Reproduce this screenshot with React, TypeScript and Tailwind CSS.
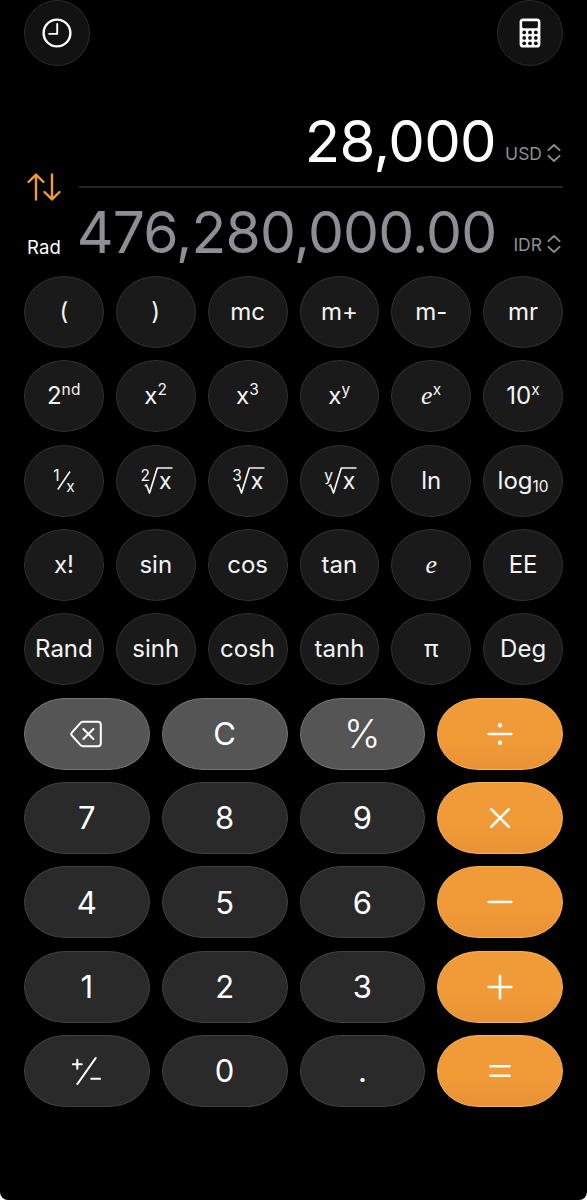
import React from 'react';

type KeyTone = 'science' | 'digit' | 'utility' | 'operator';

interface CalcKey {
  id: string;
  label: React.ReactNode;
}

interface PadKey extends CalcKey {
  tone: KeyTone;
}

const toneClasses: Record<KeyTone, string> = {
  science: 'rounded-[50%] border-[#303030] bg-[#1a1a1a] text-2xl text-[#f4f4f4]',
  digit: 'rounded-[41px/36px] border-[#404040] bg-[#2a2a2a] text-[31px] text-white',
  utility: 'rounded-[41px/36px] border-[#747474] bg-[#555555] text-[31px] text-white',
  operator:
    'rounded-[41px/36px] border-[#f6b253] bg-linear-to-b from-[#f19a38] from-60% to-[#e99236] text-white',
};

const Sup = ({ children }: { children: React.ReactNode }) => (
  <span className="inline-block -translate-y-[9px] text-[15.5px] tracking-[0.3px]">{children}</span>
);

const Euler = () => (
  <span className="font-['Liberation_Serif',serif] text-[26px] italic">e</span>
);

const Root = ({ index }: { index: string }) => (
  <span className="flex h-[27px] -translate-x-px items-start">
    <span className="w-2 pt-px text-[15.5px] leading-none">{index}</span>
    <svg width="29" height="28" viewBox="0 0 29 28" fill="none" stroke="currentColor" strokeWidth="1.7" className="-ml-1 shrink-0">
      <path d="M0.8 19 2.5 18 5.5 26 13.3 1H28.5" strokeLinejoin="round" />
    </svg>
    <span className="-ml-[14.5px] w-[10px] pt-[3px] text-[23px] leading-none">x</span>
  </span>
);

const Reciprocal = () => (
  <span className="flex h-6 items-start text-[15.5px] leading-none">
    <span className="w-[5px] -translate-y-px">1</span>
    <svg width="14" height="21" viewBox="0 0 14 21" fill="none" stroke="currentColor" strokeWidth="1.6" className="mt-px -ml-px">
      <path d="M0.8 19.5 13 1.5" />
    </svg>
    <span className="-ml-[5px] pt-[10px]">x</span>
  </span>
);

const Operator = ({ children }: { children: React.ReactNode }) => (
  <svg width="28" height="28" viewBox="-14 -14 28 28" fill="none" stroke="currentColor" strokeWidth="2.6" strokeLinecap="round">
    {children}
  </svg>
);

const BackspaceIcon = () => (
  <svg width="32" height="28" viewBox="0 0 32 28" fill="none" stroke="currentColor" strokeWidth="2" strokeLinecap="round" strokeLinejoin="round" className="-translate-x-px">
    <path d="M12.8 1.8h15a3 3 0 0 1 3 3v18.4a3 3 0 0 1-3 3h-15a3 3 0 0 1-2.2-1L2 15.6a2.4 2.4 0 0 1 0-3.2l8.6-9.6a3 3 0 0 1 2.2-1Z" />
    <path d="m13.4 9 10 10M23.4 9l-10 10" />
  </svg>
);

const PlusMinusIcon = () => (
  <svg width="30" height="30" viewBox="0 0 30 30" fill="none" stroke="currentColor" strokeWidth="2.1" strokeLinecap="round" className="-translate-x-px">
    <path d="M1.9 8.3h8.8M6.3 3.9v8.8M6.4 28 24.7 2M20.3 22.8h8.8" />
  </svg>
);

const scienceKeys: CalcKey[] = [
  { id: 'open', label: '(' },
  { id: 'close', label: ')' },
  { id: 'mc', label: 'mc' },
  { id: 'm-plus', label: 'm+' },
  { id: 'm-minus', label: 'm-' },
  { id: 'mr', label: 'mr' },
  { id: 'second', label: <span>2<Sup>nd</Sup></span> },
  { id: 'square', label: <span>x<Sup>2</Sup></span> },
  { id: 'cube', label: <span>x<Sup>3</Sup></span> },
  { id: 'power', label: <span>x<Sup>y</Sup></span> },
  { id: 'exp', label: <span><Euler /><Sup>x</Sup></span> },
  { id: 'ten-power', label: <span>10<Sup>x</Sup></span> },
  { id: 'reciprocal', label: <Reciprocal /> },
  { id: 'square-root', label: <Root index="2" /> },
  { id: 'cube-root', label: <Root index="3" /> },
  { id: 'y-root', label: <Root index="y" /> },
  { id: 'ln', label: 'ln' },
  {
    id: 'log',
    label: (
      <span>
        log<span className="inline-block translate-y-[3px] text-[15.5px]">10</span>
      </span>
    ),
  },
  { id: 'factorial', label: 'x!' },
  { id: 'sin', label: 'sin' },
  { id: 'cos', label: 'cos' },
  { id: 'tan', label: 'tan' },
  { id: 'e', label: <Euler /> },
  { id: 'ee', label: 'EE' },
  { id: 'rand', label: 'Rand' },
  { id: 'sinh', label: 'sinh' },
  { id: 'cosh', label: 'cosh' },
  { id: 'tanh', label: 'tanh' },
  { id: 'pi', label: 'π' },
  { id: 'deg', label: 'Deg' },
];

const padKeys: PadKey[] = [
  { id: 'backspace', tone: 'utility', label: <BackspaceIcon /> },
  { id: 'clear', tone: 'utility', label: 'C' },
  { id: 'percent', tone: 'utility', label: <span className="text-[39px] font-light">%</span> },
  {
    id: 'divide',
    tone: 'operator',
    label: (
      <Operator>
        <path d="M-11.2 0h22.4" />
        <circle cy="-8.8" r="2.2" fill="currentColor" stroke="none" />
        <circle cy="8.8" r="2.2" fill="currentColor" stroke="none" />
      </Operator>
    ),
  },
  { id: '7', tone: 'digit', label: '7' },
  { id: '8', tone: 'digit', label: '8' },
  { id: '9', tone: 'digit', label: '9' },
  { id: 'multiply', tone: 'operator', label: <Operator><path d="m-8.8-8.8 17.6 17.6M8.8-8.8-8.8 8.8" /></Operator> },
  { id: '4', tone: 'digit', label: '4' },
  { id: '5', tone: 'digit', label: '5' },
  { id: '6', tone: 'digit', label: '6' },
  { id: 'subtract', tone: 'operator', label: <Operator><path d="M-11.2 0h22.4" /></Operator> },
  { id: '1', tone: 'digit', label: '1' },
  { id: '2', tone: 'digit', label: '2' },
  { id: '3', tone: 'digit', label: '3' },
  { id: 'add', tone: 'operator', label: <Operator><path d="M-11.2 0h22.4M0-11.2v22.4" /></Operator> },
  { id: 'sign', tone: 'digit', label: <PlusMinusIcon /> },
  { id: '0', tone: 'digit', label: '0' },
  { id: 'decimal', tone: 'digit', label: '.' },
  { id: 'equals', tone: 'operator', label: <Operator><path d="M-9.4-4.7H9.4M-9.4 4.7H9.4" /></Operator> },
];

const Key = ({ tone, label }: { tone: KeyTone; label: React.ReactNode }) => (
  <button className={`flex h-[72px] min-w-0 items-center justify-center border leading-none ${toneClasses[tone]}`}>
    {label}
  </button>
);

const Currency = ({ code }: { code: string }) => (
  <span className="flex -translate-y-0.5 items-baseline gap-[5px] text-[17.5px] text-[#8e8e93]">
    {code}
    <svg width="16" height="18" viewBox="0 0 16 18" fill="none" stroke="currentColor" strokeWidth="1.8" strokeLinecap="round" strokeLinejoin="round" className="-translate-x-px translate-y-[2px]">
      <path d="M2.4 6.2 8 1l5.6 5.2M2.4 11.8 8 17l5.6-5.2" />
    </svg>
  </span>
);

export default function App() {
  return (
    <div className="h-[1200px] w-[587px] overflow-hidden rounded-b-[8px] bg-black px-6 font-['Inter',sans-serif] text-white">
      <header className="flex justify-between">
        <button className="flex size-[66px] items-center justify-center rounded-full border border-[#2b2b2b] bg-[#121212]">
          <svg width="30" height="30" viewBox="0 0 30 30" fill="none" stroke="currentColor">
            <circle cx="15" cy="15" r="13.4" strokeWidth="2.4" />
            <path d="M15.2 6v9.9H7.2" strokeWidth="1.9" strokeLinecap="round" strokeLinejoin="round" />
          </svg>
        </button>
        <button className="flex size-[66px] items-center justify-center rounded-full border border-[#2b2b2b] bg-[#121212]">
          <svg width="22" height="30" viewBox="0 0 22 30">
            <rect x="0.6" y="0.5" width="20.8" height="29" rx="3.6" fill="currentColor" />
            <g fill="#121212">
              <rect x="3.1" y="3.2" width="15.8" height="7" rx="1.4" />
              {[14.4, 19.9, 25.3].map((cy) =>
                [5.2, 11, 16.8].map((cx) => <circle key={`${cx}-${cy}`} cx={cx} cy={cy} r="1.9" />)
              )}
            </g>
          </svg>
        </button>
      </header>

      <section className="flex h-[210px] pt-[43px]">
        <div className="flex w-[55px] flex-col pt-16 pl-[3px]">
          <svg width="34" height="28" viewBox="0 0 34 28" fill="none" stroke="#f09a38" strokeWidth="2.4" strokeLinecap="round" strokeLinejoin="round">
            <path d="M9 26.5V1.6M1.5 9 9 1.6 16.5 9M25 1.5v24.9M17.5 19l7.5 7.4L32.5 19" />
          </svg>
          <span className="mt-[34px] text-[18.5px] leading-6 tracking-[0.2px]">Rad</span>
        </div>
        <div className="w-[484px] shrink-0">
          <div className="flex h-16 items-baseline justify-end gap-[9px] text-[58px] leading-[64px]">
            <span className="tracking-[-0.6px]">28,000</span>
            <Currency code="USD" />
          </div>
          <div className="mt-[13px] h-0.5 bg-[#252525]" />
          <div className="mt-[13px] flex h-16 items-baseline justify-end gap-[17px] text-[57px] leading-[64px] text-[#8e8e93]">
            <span className="tracking-[-0.8px]">476,280,000.00</span>
            <Currency code="IDR" />
          </div>
        </div>
      </section>

      <main className="flex flex-col gap-[12.33px]">
        <div className="grid grid-cols-6 gap-x-3 gap-y-[12.33px]">
          {scienceKeys.map((key) => (
            <Key key={key.id} tone="science" label={key.label} />
          ))}
        </div>
        <div className="grid grid-cols-4 gap-x-3 gap-y-[12.33px]">
          {padKeys.map((key) => (
            <Key key={key.id} tone={key.tone} label={key.label} />
          ))}
        </div>
      </main>
    </div>
  );
}
